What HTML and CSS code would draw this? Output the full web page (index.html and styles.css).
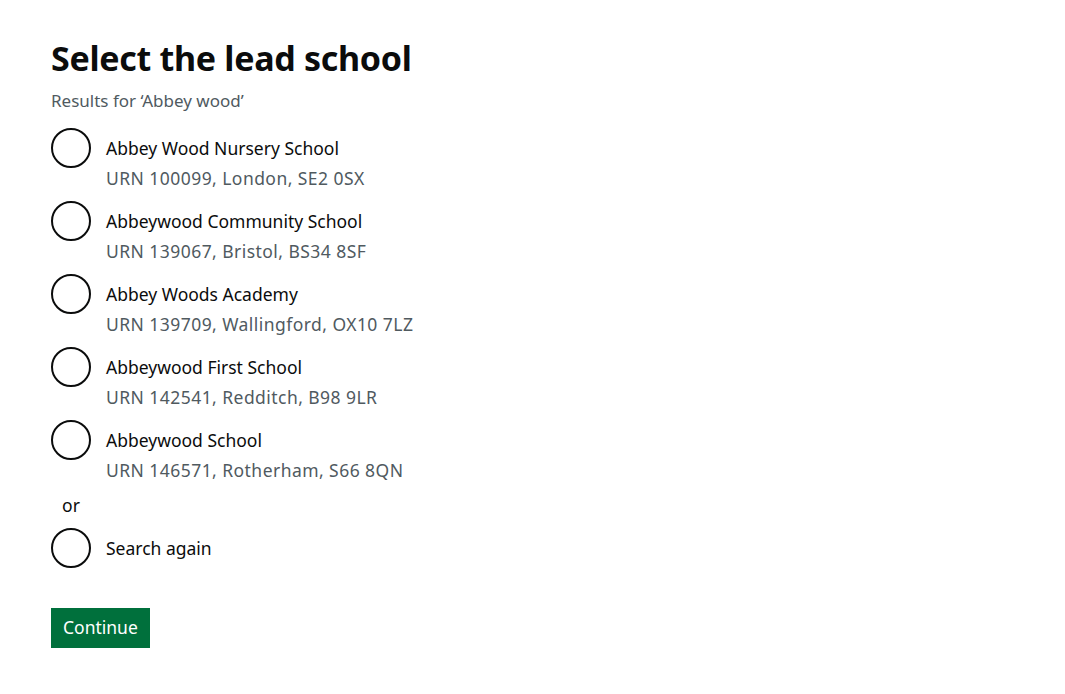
FILE: index.html
```html
<!DOCTYPE html>
<html lang="en">
<head>
<meta charset="utf-8">
<title>Select the lead school</title>
<link rel="stylesheet" href="styles.css">
</head>
<body>
<main class="page">
  <form class="form">
    <fieldset class="fieldset">
      <legend class="legend"><h1 class="heading">Select the lead school</h1></legend>
      <div class="hint">Results for ‘Abbey wood’</div>
      <div class="radios">
        <div class="radio">
          <span class="circle"></span>
          <div class="text">
            <div class="label">Abbey Wood Nursery School</div>
            <div class="item-hint">URN 100099, London, SE2 0SX</div>
          </div>
        </div>
        <div class="radio">
          <span class="circle"></span>
          <div class="text">
            <div class="label">Abbeywood Community School</div>
            <div class="item-hint">URN 139067, Bristol, BS34 8SF</div>
          </div>
        </div>
        <div class="radio">
          <span class="circle"></span>
          <div class="text">
            <div class="label">Abbey Woods Academy</div>
            <div class="item-hint">URN 139709, Wallingford, OX10 7LZ</div>
          </div>
        </div>
        <div class="radio">
          <span class="circle"></span>
          <div class="text">
            <div class="label">Abbeywood First School</div>
            <div class="item-hint">URN 142541, Redditch, B98 9LR</div>
          </div>
        </div>
        <div class="radio">
          <span class="circle"></span>
          <div class="text">
            <div class="label">Abbeywood School</div>
            <div class="item-hint">URN 146571, Rotherham, S66 8QN</div>
          </div>
        </div>
        <div class="divider">or</div>
        <div class="radio radio-last">
          <span class="circle"></span>
          <div class="text">
            <div class="label">Search again</div>
          </div>
        </div>
      </div>
    </fieldset>
    <button type="button" class="button">Continue</button>
  </form>
</main>
</body>
</html>
```
FILE: styles.css
```css
* { box-sizing: border-box; }
html, body { margin: 0; padding: 0; background: #fff; }
body {
  font-family: "Noto Sans", "Liberation Sans", Arial, sans-serif;
  color: #0b0c0c;
}
.page { padding: 38px 51px 0; }
.form { display: flex; flex-direction: column; align-items: flex-start; }
.fieldset { border: 0; margin: 0; padding: 0; }
.legend { padding: 0; margin: 0 0 10px; }
.heading { margin: 0; font-size: 34px; line-height: 40px; font-weight: 700; letter-spacing: -0.3px; }
.hint { font-size: 17px; line-height: 25px; color: #505a5f; margin-bottom: 15px; }
.radios { display: flex; flex-direction: column; }
.radio { display: flex; align-items: flex-start; margin-bottom: 10px; min-height: 40px; }
.radio-last { margin-bottom: 0; }
.circle { width: 40px; height: 40px; border: 2px solid #0b0c0c; border-radius: 50%; flex: none; }
.text { padding-left: 15px; }
.label { font-size: 17.5px; line-height: 25px; padding-top: 8px; padding-bottom: 5px; }
.item-hint { font-size: 17.5px; line-height: 25px; letter-spacing: 0.45px; color: #505a5f; }
.divider { width: 40px; text-align: center; font-size: 17.5px; line-height: 25px; margin-bottom: 10px; }
.button {
  margin-top: 40px;
  font-family: inherit;
  font-size: 17.5px;
  line-height: 21px;
  padding: 7px 10px 8px;
  border: 2px solid transparent;
  border-radius: 0;
  background: #00703c;
  color: #fff;
  box-shadow: 0 2px 0 #002d18;
  cursor: pointer;
}
```
